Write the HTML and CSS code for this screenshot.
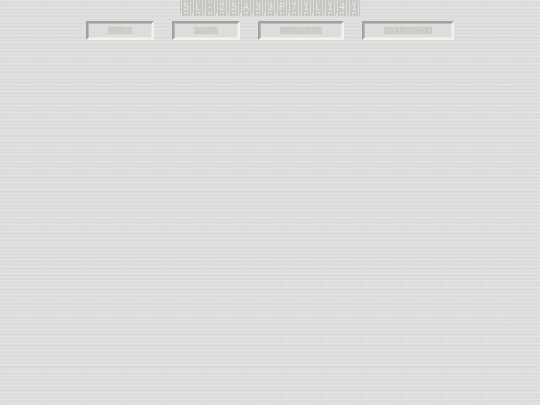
FILE: index.html
```
<!DOCTYPE html>
<html lang="en">
<head>
    <meta charset="utf-8">
    <title>5L-25A33P71L141</title>
    <link rel="stylesheet" href="styles.css">
</head>
<body>
    <header class="site-header">
        <h1 class="site-title"><span>5</span><span>L</span><span>-</span><span>2</span><span>5</span><span>A</span><span>3</span><span>3</span><span>P</span><span>7</span><span>1</span><span>L</span><span>1</span><span>4</span><span>1</span></h1>
        <nav class="menu">
            <a class="menu-item" href="#"><span class="label">5530</span></a>
            <a class="menu-item" href="#"><span class="label">P050</span></a>
            <a class="menu-item" href="#"><span class="label">2500663</span></a>
            <a class="menu-item" href="#"><span class="label">H4186557</span></a>
        </nav>
    </header>
</body>
</html>
```

FILE: styles.css
```
:root {
    --background: #dedede;
    --ink: #c8c8c4;
    --light: #f3f3e6;
    --dark: #a2a29a;
}

* {
    margin: 0;
    padding: 0;
    box-sizing: border-box;
}

body {
    min-height: 100vh;
    font-family: "Liberation Mono", monospace;
    background-color: var(--background);
    /* woven paper */
    background-image:
        repeating-linear-gradient(90deg, rgba(219, 219, 219, 0.5) 0 1px, transparent 3px 38px, rgba(219, 219, 219, 0.5) 40px),
        repeating-linear-gradient(90deg, rgba(222, 222, 222, 0.6) 0 1px, transparent 1px 3px, rgba(222, 222, 222, 0.6) 3px 4px, transparent 4px 5px),
        repeating-linear-gradient(rgba(255, 255, 255, 0.24) 0 1px, transparent 1px 2px, rgba(0, 0, 0, 0.02) 2px 3px, transparent 3px 4px, rgba(255, 255, 255, 0.14) 4px 5px, rgba(0, 0, 0, 0.02) 5px 6px, transparent 6px 7px),
        repeating-linear-gradient(transparent 0 4px, rgba(0, 0, 0, 0.02) 4px 5px, transparent 5px 11px);
}

.site-header {
    display: flex;
    flex-direction: column;
    align-items: center;
    gap: 5px;
}

.site-title {
    display: flex;
    font-size: 10px;
    font-weight: normal;
    line-height: 16px;
    color: #e6e6e3;
}

/* one slotted tile per letter */
.site-title span {
    width: 12px;
    text-align: center;
    background:
        linear-gradient(#dedede, #dedede) 4px 12px / 4px 1px no-repeat,
        linear-gradient(#dedede, #dedede) 0 13px / 1px 3px no-repeat,
        linear-gradient(#c8c8c4, #c8c8c4) 3px 3px / 6px 9px no-repeat,
        linear-gradient(90deg, #c4c4c0 1px, #dedede 1px 2px, #c4c4c0 2px 4px, #d6d6d3 4px 5px, #c6c6c2 5px 7px, #d6d6d3 7px 8px, #c4c4c0 8px 10px, #dedede 10px 11px, #c4c4c0 11px);
}

.menu {
    display: flex;
    gap: 18px;
}

.menu-item {
    padding: 4px 20px;
    border: 2px solid;
    border-color: var(--dark) var(--light) var(--light) var(--dark);
    background: #dddddd;
    box-shadow: inset 1px 1px #bcbcb5, inset -1px -1px #eaeae1;
    font-size: 10px;
    line-height: 7px;
    color: #d6d6d3;
    text-decoration: none;
}

.label {
    display: block;
    background: var(--ink);
}
```
